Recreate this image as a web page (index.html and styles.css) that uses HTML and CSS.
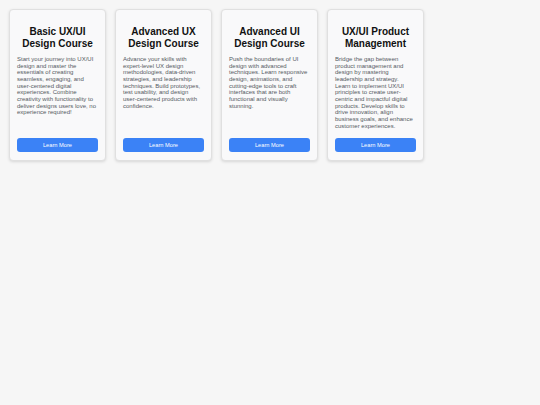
FILE: index.html
```html
<!DOCTYPE html>
<html lang="en">
<head>
<meta charset="utf-8">
<title>Courses</title>
<link rel="stylesheet" href="styles.css">
</head>
<body>
<div class="courses">
  <div class="card">
    <h2 class="title">Basic UX/UI Design Course</h2>
    <p class="desc">Start your journey into UX/UI design and master the essentials of creating seamless, engaging, and user-centered digital experiences. Combine creativity with functionality to deliver designs users love, no experience required!</p>
    <button class="btn">Learn More</button>
  </div>
  <div class="card">
    <h2 class="title">Advanced UX Design Course</h2>
    <p class="desc">Advance your skills with expert-level UX design methodologies, data-driven strategies, and leadership techniques. Build prototypes, test usability, and design user-centered products with confidence.</p>
    <button class="btn">Learn More</button>
  </div>
  <div class="card">
    <h2 class="title">Advanced UI Design Course</h2>
    <p class="desc">Push the boundaries of UI design with advanced techniques. Learn responsive design, animations, and cutting-edge tools to craft interfaces that are both functional and visually stunning.</p>
    <button class="btn">Learn More</button>
  </div>
  <div class="card">
    <h2 class="title">UX/UI Product Management</h2>
    <p class="desc">Bridge the gap between product management and design by mastering leadership and strategy. Learn to implement UX/UI principles to create user-centric and impactful digital products. Develop skills to drive innovation, align business goals, and enhance customer experiences.</p>
    <button class="btn">Learn More</button>
  </div>
</div>
</body>
</html>
```

FILE: styles.css
```css
html, body {
  margin: 0;
  padding: 0;
  background: #f6f6f6;
  font-family: "Liberation Sans", Arial, sans-serif;
}

.courses {
  display: flex;
  align-items: stretch;
  gap: 9px;
  padding: 9px;
}

.card {
  box-sizing: border-box;
  width: 97px;
  display: flex;
  flex-direction: column;
  background: #f9f9fa;
  border: 1px solid #e0e0e0;
  border-radius: 4px;
  box-shadow: 0 1px 3px rgba(0, 0, 0, 0.13);
  padding: 7px 7px 8px;
}

.title {
  margin: 9px 0 7px;
  font-size: 10px;
  font-weight: 700;
  line-height: 11.5px;
  color: #111;
  text-align: center;
}

.desc {
  margin: 0 1px 9px 0;
  font-size: 6px;
  line-height: 6.67px;
  color: #555a63;
}

.btn {
  margin-top: auto;
  height: 14px;
  width: 100%;
  border: none;
  border-radius: 3px;
  background: #3b82f6;
  color: #ffffff;
  font-family: "Liberation Sans", Arial, sans-serif;
  font-size: 5.7px;
  padding: 0;
  flex-shrink: 0;
}
```
